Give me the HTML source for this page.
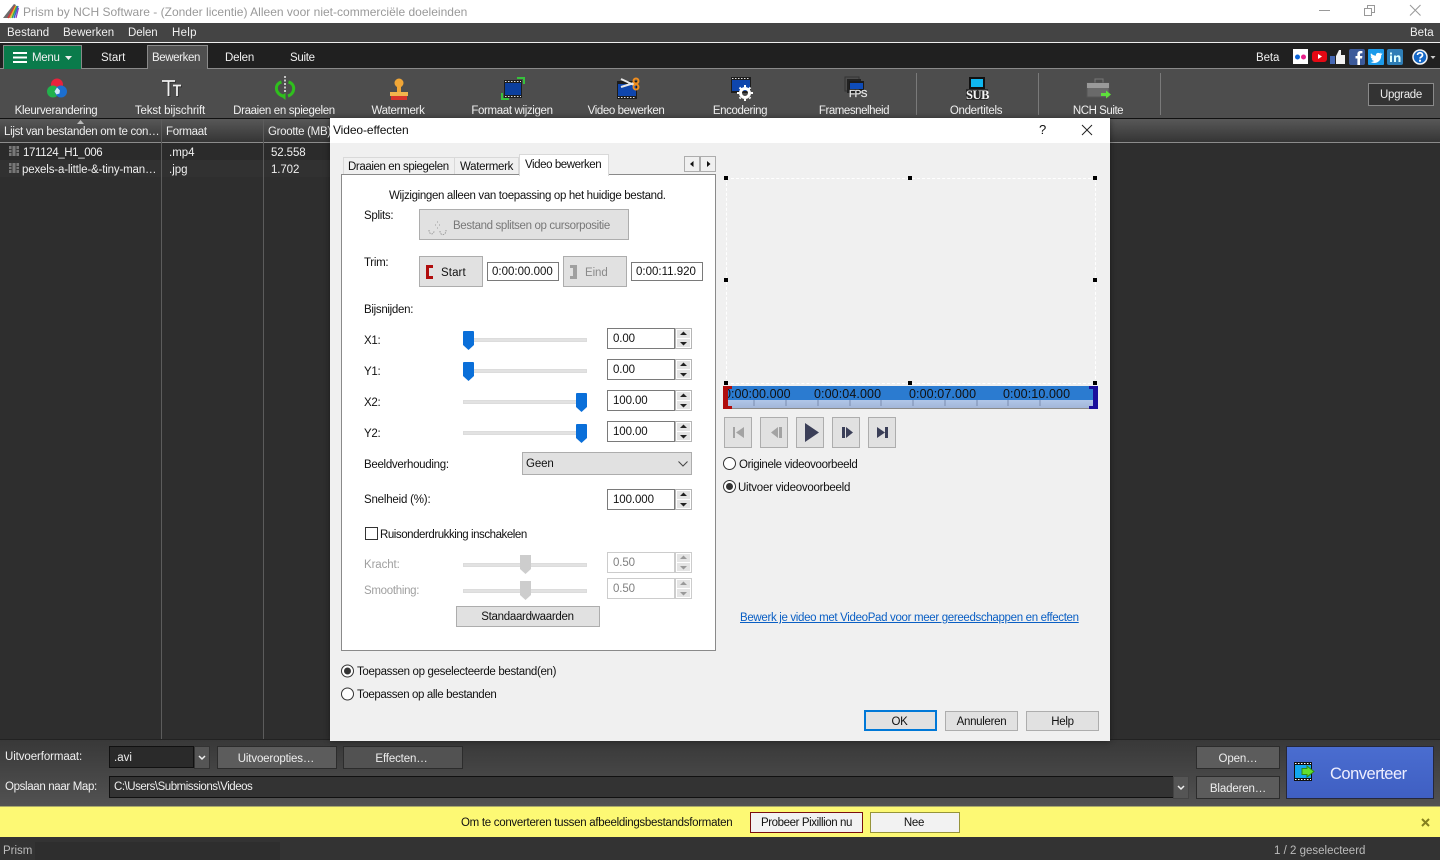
<!DOCTYPE html>
<html lang="nl"><head><meta charset="utf-8"><title>Prism by NCH Software</title>
<style>
*{box-sizing:border-box}
html,body{margin:0;padding:0;width:1440px;height:860px;overflow:hidden;background:#2e2e2e}
body{position:relative;font-family:"Liberation Sans",sans-serif;font-size:11.5px;letter-spacing:-.3px}
.a{position:absolute}
.t{position:absolute;white-space:nowrap;line-height:14px;height:14px;transform:translateY(1px)}
.c{text-align:center}
.w{color:#f0f0f0}.k{color:#111}.g{color:#a0a0a0}
.btn{position:absolute;background:#e1e1e1;border:1px solid #adadad;color:#111;text-align:center;white-space:nowrap}
.dbtn{position:absolute;background:#5c5c5c;border:1px solid #2c2c2c;color:#eee;text-align:center;white-space:nowrap;line-height:24px;letter-spacing:-.15px}
.field{position:absolute;background:#fff;border:1px solid #7a7a7a;color:#111;line-height:19px;padding-left:4px;white-space:nowrap;letter-spacing:0}
.f21{line-height:21px;padding-left:5px;letter-spacing:-.1px}
.spin{position:absolute;width:17px;background:#fff;border:1px solid #b5b5b5}
.spin i{position:absolute;left:1px;width:13px;height:8px;background:#e4e4e4}
.spin i:first-child{top:1px}.spin i:last-child{bottom:1px}
.track{position:absolute;height:4px;width:124px;left:463px;background:#e2e2e2;border:1px solid #dcdcdc}
.h{position:absolute;width:4px;height:4px;background:#000}
.hdr{position:absolute;top:119px;height:23px;line-height:26px;color:#eee;white-space:nowrap}
.sep{position:absolute;top:73px;width:1px;height:42px;background:#7a7a7a}
.lbl{position:absolute;top:104px;height:14px;line-height:14px;color:#f0f0f0;white-space:nowrap;text-align:center}
svg{position:absolute;display:block;overflow:visible}
</style></head><body>

<!-- Title bar -->
<div class="a" style="left:0;top:0;width:1440px;height:23px;background:#fff"></div>
<svg style="left:3px;top:3px" width="16" height="16" viewBox="0 0 16 16"><path d="M0 15L11 1l2 1-6 13z" fill="#6d6d6d"/><path d="M5 15L12 3" stroke="#d8343c" stroke-width="1.500"/><path d="M7 15L13 3" stroke="#e8b92c" stroke-width="1.500"/><path d="M9 15L14 3" stroke="#3aa84a" stroke-width="1.500"/><path d="M11 15L15 3" stroke="#3468cc" stroke-width="1.500"/><path d="M13 15L15.500 5" stroke="#8a3cc0" stroke-width="1.200"/></svg>
<div class="t" style="left:23px;top:4px;color:#999;font-size:12px;letter-spacing:.01px">Prism by NCH Software - (Zonder licentie) Alleen voor niet-commerciële doeleinden</div>
<svg style="left:1318px;top:4px" width="112" height="14"><path d="M1 6.500H12" stroke="#999" fill="none"/><path d="M46.500 4.500h7v7h-7zM49.500 4.500v-3h7v7h-3" stroke="#999" fill="none"/><path d="M92 1L102.500 11.500M102.500 1L92 11.500" stroke="#999" fill="none"/></svg>

<!-- Menu bar -->
<div class="a" style="left:0;top:23px;width:1440px;height:19px;background:#444"></div>
<div class="a" style="left:0;top:42px;width:1440px;height:1px;background:#eee"></div>
<div class="t w" style="left:7px;top:25px;letter-spacing:0">Bestand</div>
<div class="t w" style="left:63px;top:25px;letter-spacing:0">Bewerken</div>
<div class="t w" style="left:128px;top:25px;letter-spacing:-.1px">Delen</div>
<div class="t w" style="left:172px;top:25px;letter-spacing:.3px">Help</div>
<div class="t w" style="left:1410px;top:25px;letter-spacing:0">Beta</div>

<!-- Tabs bar -->
<div class="a" style="left:0;top:43px;width:1440px;height:25px;background:#202020"></div>
<div class="a" style="left:0;top:68px;width:1440px;height:1px;background:#8a8a8a"></div>
<div class="a" style="left:3px;top:45px;width:79px;height:24px;background:#0a7b4b;border:1px solid #888;border-bottom:0"></div>
<svg style="left:13px;top:52px" width="14" height="11"><path d="M0 1h14M0 5.500h14M0 10h14" stroke="#fff" stroke-width="2"/></svg>
<div class="t w" style="left:32px;top:50px">Menu</div>
<svg style="left:65px;top:56px" width="7" height="4"><path d="M0 0h7L3.500 4z" fill="#eee"/></svg>
<div class="t w" style="left:101px;top:50px;letter-spacing:0">Start</div>
<div class="a" style="left:147px;top:45px;width:61px;height:24px;background:#4f4f4f;border:1px solid #8a8a8a;border-bottom:0"></div>
<div class="t w" style="left:152px;top:50px;letter-spacing:-.4px">Bewerken</div>
<div class="t w" style="left:225px;top:50px;letter-spacing:-.2px">Delen</div>
<div class="t w" style="left:290px;top:50px;letter-spacing:-.3px">Suite</div>
<div class="t w" style="left:1256px;top:50px;letter-spacing:-.1px">Beta</div>
<!-- Social -->
<svg style="left:1293px;top:49px" width="16" height="16"><rect width="15" height="15" fill="#fff"/><circle cx="4.500" cy="8" r="2.500" fill="#0a63d8"/><circle cx="10.500" cy="8" r="2.500" fill="#e8208a"/></svg>
<svg style="left:1312px;top:51px" width="16" height="13"><rect width="15" height="11" rx="3" fill="#e50914"/><path d="M6 3l4 2.500L6 8z" fill="#fff"/></svg>
<svg style="left:1330px;top:49px" width="16" height="16"><rect x="0" y="7" width="5" height="8" fill="#4668b4"/><path d="M6 7l3-6h2v5h4v9H6z" fill="#f2f2f2"/></svg>
<svg style="left:1349px;top:49px" width="16" height="16"><rect width="16" height="16" rx="2" fill="#3c5a9a"/><path d="M11 16V9.500h2l.4-2.500H11V5.500c0-.8.300-1.200 1.200-1.200h1.200V2h-2C9.500 2 8.400 3.200 8.400 5V7H6.500v2.500h1.900V16z" fill="#fff"/></svg>
<svg style="left:1368px;top:49px" width="16" height="16"><rect width="16" height="16" rx="1" fill="#1d9bea"/><path d="M13.500 4.500c-.5.200-1 .4-1.500.4.500-.3 1-.800 1.200-1.400-.5.300-1 .5-1.700.7C10.100 3.300 7.500 4.200 8 6.700 6 6.600 4.200 5.700 3 4.200c-.7 1.200-.3 2.700.8 3.400-.4 0-.8-.1-1.200-.3 0 1.300.9 2.400 2.200 2.700-.4.100-.8.100-1.200 0 .3 1.100 1.300 1.800 2.500 1.900-1 .8-2.300 1.200-3.600 1 5 3 11-.5 10.700-6.700.5-.4.900-.9 1.300-1.700z" fill="#fff"/></svg>
<svg style="left:1387px;top:49px" width="16" height="16"><rect width="16" height="16" rx="2" fill="#2e7eb6"/><path d="M3 6.500h2V13H3zM3 3.500h2v2H3zM7 6.500h2v1c.5-.8 1.300-1.200 2.200-1.200 1.600 0 2.300 1 2.300 2.800V13h-2V9.500c0-1-.3-1.500-1.100-1.500S9 8.600 9 9.500V13H7z" fill="#dff"/></svg>
<svg style="left:1412px;top:49px" width="22" height="16"><circle cx="8" cy="8" r="7" fill="#1467c6" stroke="#f4f4f4" stroke-width="1.500"/><path d="M5.500 6c0-3 5-3 5 0 0 2-2.500 2-2.500 3.500" fill="none" stroke="#fff" stroke-width="1.700"/><rect x="7" y="10.700" width="2" height="2" fill="#fff"/><path d="M18.500 7h5l-2.500 3z" fill="#ccc"/></svg>

<!-- Toolbar -->
<div class="a" style="left:0;top:69px;width:1440px;height:49px;background:#4d4d4d"></div>
<div class="a" style="left:0;top:118px;width:1440px;height:1px;background:#111"></div>
<div class="sep" style="left:916px"></div><div class="sep" style="left:1038px"></div><div class="sep" style="left:1160px"></div>
<svg style="left:47px;top:78px" width="20" height="20"><circle cx="10" cy="6.500" r="6" fill="#e8223c"/><circle cx="6" cy="13.500" r="6" fill="#22b14c"/><circle cx="14" cy="13.500" r="6" fill="#1c6fd0"/><path d="M10 9.500l3 3-.5 3-3 1-2-3z" fill="#cfe8f4"/></svg>
<svg style="left:161px;top:79px" width="20" height="19"><path d="M1 2h13M7.500 2V17M12 6.500h8M16 6.500V17" stroke="#222" stroke-width="1.800" fill="none" transform="translate(1,1)" opacity=".6"/><path d="M1 2h13M7.500 2V17M12 6.500h8M16 6.500V17" stroke="#f0f0f0" stroke-width="1.800" fill="none"/></svg>
<svg style="left:274px;top:76px" width="22" height="24"><path d="M11 0v17" stroke="#eee" stroke-dasharray="2 1.500" stroke-width="1.500"/><path d="M7.500 6C0 8 1 18 9 20M14.500 6C22 8 21 18 14 20" fill="none" stroke="#2fbf1d" stroke-width="3"/><path d="M11.500 24l-5-4 5-3z" fill="#2fbf1d"/></svg>
<svg style="left:389px;top:76px" width="20" height="24"><circle cx="10" cy="7" r="4.500" fill="#f0a637"/><path d="M8 10h4v6H8z" fill="#f0a637"/><path d="M1 16h18v4H1z" fill="#f3b54d"/><path d="M2 20h16v4H2z" fill="#d8352c"/></svg>
<svg style="left:501px;top:76px" width="24" height="24"><path d="M3 4h18v18H3z" fill="#1d1d1d"/><path d="M4 7h16v12H4z" fill="#0c3f9e"/><path d="M16 2h7v6M8 23H1v-6" fill="none" stroke="#37c13c" stroke-width="2"/><path d="M4 5.500h16M4 20.500h16" stroke="#ddd" stroke-dasharray="1.500 1.500"/></svg>
<svg style="left:617px;top:76px" width="24" height="24"><path d="M0 5h20v18H0z" fill="#1c1c1c"/><path d="M1 8h18v12H1z" fill="#0f46ad"/><path d="M1 21.500h18" stroke="#ddd" stroke-dasharray="1.500 1.500"/><path d="M4 3l13 6M4 11l13-4" stroke="#e6e6e6" stroke-width="2"/><circle cx="19" cy="5" r="2.500" fill="none" stroke="#ef8d1f" stroke-width="2"/><circle cx="19" cy="11" r="2.500" fill="none" stroke="#ef8d1f" stroke-width="2"/></svg>
<svg style="left:731px;top:76px" width="24" height="24"><path d="M0 1h20v16H0z" fill="#1c1c1c"/><path d="M1 4h18v11H1z" fill="#0f46ad"/><path d="M1 2.500h18" stroke="#ddd" stroke-dasharray="1.500 1.500"/><circle cx="14" cy="17" r="4.500" fill="none" stroke="#fff" stroke-width="3"/><path d="M14 9v16M6 17h16M8.500 11.500l11 11M19.500 11.500l-11 11" stroke="#fff" stroke-width="2" stroke-dasharray="2 12"/></svg>
<svg style="left:845px;top:77px" width="24" height="24"><path d="M0 0h14v14H0z" fill="none" stroke="#333"/><path d="M2 2h14v14H2z" fill="#222"/><path d="M4 4h15v10H4z" fill="#1b1b1b"/><path d="M5 6h13v6H5z" fill="#0f4cb8"/></svg>
<div class="t" style="left:849px;top:87px;color:#e8e8e8;font-size:10px;letter-spacing:-.5px;-webkit-text-stroke:.3px #e8e8e8">FPS</div>
<svg style="left:966px;top:77px" width="22" height="24"><path d="M3 0h16v12H3z" fill="#111"/><path d="M5 2h12v8H5z" fill="#10b6ee"/><path d="M0 12h22v11H0z" fill="#2a2a2a"/></svg>
<div class="t" style="left:966px;top:88px;color:#f4f4f4;font-size:12.500px;font-family:'Liberation Serif',serif;font-weight:bold;letter-spacing:-.4px;height:12px;line-height:12px">SUB</div>
<svg style="left:1086px;top:78px" width="26" height="22"><path d="M9 1h8v4H9z" fill="none" stroke="#777"/><path d="M1 5h22v14H1z" fill="#6a6a6a" stroke="#555"/><path d="M1 5h22v5H1z" fill="#9a9a9a"/><path d="M15 15h5v-2.500l5 4-5 4V18h-5z" fill="#5ee03c"/></svg>
<div class="lbl" style="left:-1px;width:114px">Kleurverandering</div>
<div class="lbl" style="left:113px;width:114px;letter-spacing:-.12px">Tekst bijschrift</div>
<div class="lbl" style="left:227px;width:114px;letter-spacing:-.35px">Draaien en spiegelen</div>
<div class="lbl" style="left:341px;width:114px">Watermerk</div>
<div class="lbl" style="left:455px;width:114px;letter-spacing:-.35px">Formaat wijzigen</div>
<div class="lbl" style="left:569px;width:114px;letter-spacing:-.4px">Video bewerken</div>
<div class="lbl" style="left:683px;width:114px;letter-spacing:-.4px">Encodering</div>
<div class="lbl" style="left:797px;width:114px;letter-spacing:-.45px">Framesnelheid</div>
<div class="lbl" style="left:919px;width:114px">Ondertitels</div>
<div class="lbl" style="left:1041px;width:114px;letter-spacing:-.45px">NCH Suite</div>
<div class="a" style="left:1368px;top:83px;width:66px;height:23px;background:#333;border:1px solid #8a8a8a;color:#eee;text-align:center;line-height:22px">Upgrade</div>

<!-- List -->
<div class="a" style="left:0;top:119px;width:1440px;height:23px;background:linear-gradient(#585858,#353535)"></div>
<div class="a" style="left:0;top:142px;width:1440px;height:1px;background:#8c8c8c"></div>
<div class="a" style="left:0;top:143px;width:330px;height:17px;background:#2b2b2b"></div>
<div class="a" style="left:0;top:160px;width:330px;height:17px;background:#313131"></div>
<div class="a" style="left:161px;top:119px;width:1px;height:620px;background:#5c5c5c"></div>
<div class="a" style="left:263px;top:119px;width:1px;height:620px;background:#5c5c5c"></div>
<div class="hdr" style="left:4px">Lijst van bestanden om te con…</div>
<div class="hdr" style="left:166px">Formaat</div>
<div class="hdr" style="left:268px">Grootte (MB)</div>
<svg style="left:77px;top:120px" width="7" height="4"><path d="M0 4L3.500 0 7 4z" fill="#bbb"/></svg>
<svg style="left:9px;top:146px" width="10" height="28"><g fill="#777"><path d="M0 0h10v10H0zM0 17h10v10H0z"/></g><path d="M3 0v10M7 0v10M0 3.500h3M0 6.500h3M7 3.500h3M7 6.500h3M3 17v10M7 17v10M0 20.500h3M0 23.500h3M7 20.500h3M7 23.500h3" stroke="#3a3a3a"/></svg>
<div class="t w" style="left:23px;top:145px;letter-spacing:-.38px">171124_H1_006</div>
<div class="t w" style="left:22px;top:162px;letter-spacing:-.16px">pexels-a-little-&amp;-tiny-man…</div>
<div class="t w" style="left:169px;top:145px;letter-spacing:0">.mp4</div>
<div class="t w" style="left:169px;top:162px;letter-spacing:0">.jpg</div>
<div class="t w" style="left:271px;top:145px;letter-spacing:-.1px">52.558</div>
<div class="t w" style="left:271px;top:162px;letter-spacing:-.1px">1.702</div>

<!-- Bottom panel -->
<div class="a" style="left:0;top:739px;width:1440px;height:67px;background:linear-gradient(#383838,#525252)"></div>
<div class="a" style="left:0;top:739px;width:1440px;height:1px;background:#222"></div>
<div class="t w" style="left:5px;top:749px;letter-spacing:-.1px">Uitvoerformaat:</div>
<div class="t w" style="left:5px;top:779px;letter-spacing:-.35px">Opslaan naar Map:</div>
<div class="a" style="left:109px;top:746px;width:85px;height:22px;background:#2a2a2a;border:1px solid #111;color:#eee;line-height:23px;padding-left:4px;letter-spacing:0">.avi</div>
<div class="a" style="left:194px;top:746px;width:16px;height:23px;background:#555;border:1px solid #333"></div>
<svg style="left:198px;top:755px" width="8" height="5"><path d="M1 1l3 3 3-3" fill="none" stroke="#eee" stroke-width="1.500"/></svg>
<div class="dbtn" style="left:217px;top:746px;width:120px;height:23px;padding-right:2px">Uitvoeropties…</div>
<div class="dbtn" style="left:343px;top:746px;width:120px;height:23px;background:#525252;padding-right:3px">Effecten…</div>
<div class="a" style="left:109px;top:776px;width:1064px;height:22px;background:#333;border-top:1px solid #111;border-left:1px solid #111;border-bottom:1px solid #111;color:#eee;line-height:20px;padding-left:4px;letter-spacing:-.48px">C:\Users\Submissions\Videos</div>
<div class="a" style="left:1173px;top:776px;width:16px;height:23px;background:#555;border:1px solid #444"></div>
<svg style="left:1177px;top:785px" width="8" height="5"><path d="M1 1l3 3 3-3" fill="none" stroke="#eee" stroke-width="1.500"/></svg>
<div class="dbtn" style="left:1196px;top:746px;width:84px;height:23px">Open…</div>
<div class="dbtn" style="left:1196px;top:776px;width:84px;height:23px">Bladeren…</div>
<div class="a" style="left:1286px;top:746px;width:148px;height:53px;background:linear-gradient(#4a6dd0,#3f5fc2);border:1px solid #26283a"></div>
<svg style="left:1294px;top:762px" width="22" height="20"><path d="M0 0h18v19H0z" fill="#111"/><path d="M1 3h16v13H1z" fill="#12a7ef"/><path d="M1 1.500h16M1 17.500h16" stroke="#fff" stroke-dasharray="1.500 1.500"/><path d="M8 6.500h5V4l7 5.500-7 5.500v-2.500H8z" fill="#62e02f" stroke="#2d8a16"/></svg>
<div class="t" style="left:1330px;top:764px;height:18px;line-height:18px;font-size:16.500px;color:#eef;letter-spacing:-.5px">Converteer</div>

<!-- Yellow bar -->
<div class="a" style="left:0;top:806px;width:1440px;height:31px;background:#fdf974;border-top:1px solid #a9a96a"></div>
<div class="t k" style="left:461px;top:815px;letter-spacing:-.29px">Om te converteren tussen afbeeldingsbestandsformaten</div>
<div class="a" style="left:750px;top:812px;width:113px;height:21px;background:#f2f2f2;border:1px solid #7a0f0f;color:#111;text-align:center;line-height:20px;letter-spacing:-.4px">Probeer Pixillion nu</div>
<div class="a" style="left:870px;top:812px;width:90px;height:21px;background:#f2f2f2;border:1px solid #96943a;color:#111;text-align:center;line-height:20px;padding-right:2px">Nee</div>
<svg style="left:1421px;top:818px" width="9" height="9"><path d="M1 1l7 7M8 1L1 8" stroke="#85801e" stroke-width="2"/></svg>

<!-- Status -->
<div class="a" style="left:0;top:837px;width:1440px;height:23px;background:#333"></div>
<div class="a" style="left:35px;top:842px;width:245px;height:18px;background:#2e2e2e"></div>
<div class="t" style="left:3px;top:843px;color:#bbb;letter-spacing:0">Prism</div>
<div class="t" style="left:1274px;top:843px;color:#bbb;letter-spacing:0">1 / 2 geselecteerd</div>

<!-- Dialog -->
<div class="a" style="left:330px;top:118px;width:780px;height:623px;background:#f0f0f0;box-shadow:0 0 6px rgba(0,0,0,.45)"></div>
<div class="a" style="left:330px;top:118px;width:780px;height:25px;background:#fff"></div>
<div class="t k" style="left:333px;top:122px;font-size:12px;letter-spacing:-.1px">Video-effecten</div>
<div class="t k" style="left:1039px;top:122px;font-size:13px;letter-spacing:0">?</div>
<svg style="left:1082px;top:125px" width="10" height="10"><path d="M0 0l10 10M10 0L0 10" stroke="#222" fill="none"/></svg>

<!-- Tabs -->
<div class="a" style="left:343px;top:157px;width:112px;height:18px;background:#f0f0f0;border:1px solid #d9d9d9;border-bottom:0"></div>
<div class="a" style="left:455px;top:157px;width:64px;height:18px;background:#f0f0f0;border:1px solid #d9d9d9;border-left:0;border-bottom:0"></div>
<div class="t k" style="left:348px;top:159px;letter-spacing:-.4px">Draaien en spiegelen</div>
<div class="t k" style="left:460px;top:159px">Watermerk</div>
<div class="a" style="left:341px;top:174px;width:375px;height:477px;background:#fff;border:1px solid #8a8a8a"></div>
<div class="a" style="left:519px;top:154px;width:90px;height:22px;background:#fff;border:1px solid #d9d9d9;border-bottom:0"></div>
<div class="t k" style="left:525px;top:157px;letter-spacing:-.43px">Video bewerken</div>
<div class="a" style="left:684px;top:156px;width:16px;height:16px;background:#f0f0f0;border:1px solid #adadad"></div>
<div class="a" style="left:700px;top:156px;width:16px;height:16px;background:#f0f0f0;border:1px solid #adadad"></div>
<svg style="left:690px;top:161px" width="24" height="6"><path d="M3.500 0v6L0 3zM17 0v6l3.500-3z" fill="#111"/></svg>

<div class="t k" style="left:389px;top:188px;letter-spacing:-.34px">Wijzigingen alleen van toepassing op het huidige bestand.</div>
<div class="t k" style="left:364px;top:208px">Splits:</div>
<div class="btn" style="left:419px;top:209px;width:210px;height:31px"></div>
<svg style="left:428px;top:220px" width="20" height="17"><path d="M1 10c0 5 5 5 5 1M9 2h1M7 5h1M11 5h1M9 8h1M12 11c0 5 6 5 6-1" stroke="#9a9a9a" fill="none" stroke-dasharray="1.500 1"/></svg>
<div class="t" style="left:453px;top:218px;color:#787878;letter-spacing:-.36px">Bestand splitsen op cursorpositie</div>
<div class="t k" style="left:364px;top:255px">Trim:</div>
<div class="btn" style="left:419px;top:256px;width:64px;height:31px"></div>
<svg style="left:426px;top:265px" width="8" height="14"><path d="M0 0h7v3H3v8h4v3H0z" fill="#b00d0d"/></svg>
<div class="t k" style="left:441px;top:265px;letter-spacing:.1px">Start</div>
<div class="field" style="left:487px;top:262px;width:72px;height:19px">0:00:00.000</div>
<div class="btn" style="left:563px;top:256px;width:64px;height:31px"></div>
<svg style="left:570px;top:265px" width="7" height="14"><path d="M0 0h7v14H0v-3h3V3H0z" fill="#a0a0a0"/></svg>
<div class="t" style="left:585px;top:265px;color:#8a8a8a;letter-spacing:-.1px">Eind</div>
<div class="field" style="left:631px;top:262px;width:72px;height:19px">0:00:11.920</div>
<div class="t k" style="left:364px;top:302px">Bijsnijden:</div>

<div class="t k" style="left:364px;top:333px">X1:</div>
<div class="t k" style="left:364px;top:364px">Y1:</div>
<div class="t k" style="left:364px;top:395px">X2:</div>
<div class="t k" style="left:364px;top:426px">Y2:</div>
<div class="track" style="top:338px"></div><div class="track" style="top:369px"></div><div class="track" style="top:400px"></div><div class="track" style="top:431px"></div>
<svg style="left:463px;top:331px" width="11" height="19"><path d="M0 1a1 1 0 011-1h9a1 1 0 011 1v13l-5.500 5L0 14z" fill="#0a6fd9"/></svg>
<svg style="left:463px;top:362px" width="11" height="19"><path d="M0 1a1 1 0 011-1h9a1 1 0 011 1v13l-5.500 5L0 14z" fill="#0a6fd9"/></svg>
<svg style="left:576px;top:393px" width="11" height="19"><path d="M0 1a1 1 0 011-1h9a1 1 0 011 1v13l-5.500 5L0 14z" fill="#0a6fd9"/></svg>
<svg style="left:576px;top:424px" width="11" height="19"><path d="M0 1a1 1 0 011-1h9a1 1 0 011 1v13l-5.500 5L0 14z" fill="#0a6fd9"/></svg>

<div class="field f21" style="left:607px;top:328px;width:68px;height:21px">0.00</div>
<div class="field f21" style="left:607px;top:359px;width:68px;height:21px">0.00</div>
<div class="field f21" style="left:607px;top:390px;width:68px;height:21px">100.00</div>
<div class="field f21" style="left:607px;top:421px;width:68px;height:21px">100.00</div>
<div class="field f21" style="left:607px;top:489px;width:68px;height:21px">100.000</div>
<div class="spin" style="left:675px;top:328px;height:21px"><i></i><i></i></div>
<div class="spin" style="left:675px;top:359px;height:21px"><i></i><i></i></div>
<div class="spin" style="left:675px;top:390px;height:21px"><i></i><i></i></div>
<div class="spin" style="left:675px;top:421px;height:21px"><i></i><i></i></div>
<div class="spin" style="left:675px;top:489px;height:21px"><i></i><i></i></div>
<svg style="left:680px;top:331px" width="7" height="180"><path d="M0 4l3.500-3.500L7 4zM0 11h7l-3.500 3.500z" fill="#222"/><path d="M0 35l3.500-3.500L7 35zM0 42h7l-3.500 3.500zM0 66l3.500-3.500L7 66zM0 73h7l-3.500 3.500zM0 97l3.500-3.500L7 97zM0 104h7l-3.500 3.500zM0 165l3.500-3.500L7 165zM0 172h7l-3.500 3.500z" fill="#222"/></svg>

<div class="t k" style="left:364px;top:457px;letter-spacing:-.3px">Beeldverhouding:</div>
<div class="a" style="left:522px;top:452px;width:170px;height:23px;background:#e1e1e1;border:1px solid #adadad;color:#111;line-height:22px;padding-left:3px;letter-spacing:-.1px">Geen</div>
<svg style="left:678px;top:461px" width="10" height="6"><path d="M.5.5L5 5 9.500.5" fill="none" stroke="#444"/></svg>
<div class="t k" style="left:364px;top:492px;letter-spacing:-.2px">Snelheid (%):</div>

<div class="a" style="left:365px;top:527px;width:13px;height:13px;background:#fff;border:1px solid #333"></div>
<div class="t k" style="left:380px;top:527px;letter-spacing:-.45px">Ruisonderdrukking inschakelen</div>
<div class="t" style="left:364px;top:557px;color:#a0a0a0;letter-spacing:-.1px">Kracht:</div>
<div class="t" style="left:364px;top:583px;color:#a0a0a0;letter-spacing:-.3px">Smoothing:</div>
<div class="track" style="top:563px"></div><div class="track" style="top:589px"></div>
<svg style="left:520px;top:555px" width="11" height="19"><path d="M0 0h11v14l-5.500 5L0 14z" fill="#cdcdcd"/></svg>
<svg style="left:520px;top:581px" width="11" height="19"><path d="M0 0h11v14l-5.500 5L0 14z" fill="#cdcdcd"/></svg>
<div class="field f21" style="left:607px;top:552px;width:68px;height:21px;border-color:#ccc;color:#808080">0.50</div>
<div class="field f21" style="left:607px;top:578px;width:68px;height:21px;border-color:#ccc;color:#808080">0.50</div>
<div class="spin" style="left:675px;top:552px;height:21px;border-color:#ccc"><i></i><i></i></div>
<div class="spin" style="left:675px;top:578px;height:21px;border-color:#ccc"><i></i><i></i></div>
<svg style="left:680px;top:555px" width="7" height="45"><path d="M0 4l3.500-3.500L7 4zM0 11h7l-3.500 3.500zM0 30l3.500-3.500L7 30zM0 37h7l-3.500 3.500z" fill="#999"/></svg>
<div class="btn" style="left:456px;top:606px;width:144px;height:21px;line-height:21px;padding-right:1px">Standaardwaarden</div>

<!-- radios -->
<svg style="left:341px;top:664px" width="14" height="37"><circle cx="6.500" cy="7" r="6" fill="#fff" stroke="#333"/><circle cx="6.500" cy="7" r="3.500" fill="#333"/><circle cx="6.500" cy="30" r="6" fill="#fff" stroke="#333"/></svg>
<div class="t k" style="left:357px;top:664px;letter-spacing:-.33px">Toepassen op geselecteerde bestand(en)</div>
<div class="t k" style="left:357px;top:687px;letter-spacing:-.38px">Toepassen op alle bestanden</div>

<!-- Preview -->
<div class="a" style="left:726px;top:178px;width:370px;height:206px;border:1px dashed #fff"></div>
<div class="h" style="left:724px;top:176px"></div><div class="h" style="left:908px;top:176px"></div><div class="h" style="left:1093px;top:176px"></div>
<div class="h" style="left:724px;top:278px"></div><div class="h" style="left:1093px;top:278px"></div>
<div class="h" style="left:724px;top:381px"></div><div class="h" style="left:908px;top:381px"></div><div class="h" style="left:1093px;top:381px"></div>

<!-- Timeline -->
<div class="a" style="left:724px;top:386px;width:374px;height:14px;background:#2b7bd0"></div>
<div class="a" style="left:724px;top:400px;width:374px;height:9px;background:linear-gradient(#b0c6e8,#a3b6d8);border-bottom:1px solid #8a8a8a"></div>
<div class="t k" style="left:724px;top:386px;font-size:12.500px;letter-spacing:.05px">0:00:00.000</div>
<div class="t k" style="left:814px;top:386px;font-size:12.500px;letter-spacing:.1px">0:00:04.000</div>
<div class="t k" style="left:909px;top:386px;font-size:12.500px;letter-spacing:.1px">0:00:07.000</div>
<div class="t k" style="left:1003px;top:386px;font-size:12.500px;letter-spacing:.1px">0:00:10.000</div>
<svg style="left:723px;top:386px" width="376" height="23"><path d="M0 0h9v3H5v17h4v3H0z" fill="#b00d0d"/><path d="M375 0h-9v3h4v17h-4v3h9z" fill="#1a0f9c"/><path d="M31 14v6M63 14v6M95 14v6M127 14v6M158 14v6M190 14v6M222 14v6M254 14v6M285 14v6M317 14v6" stroke="#7b8db0"/></svg>

<!-- Player buttons -->
<div class="btn" style="left:724px;top:417px;width:28px;height:31px"></div>
<div class="btn" style="left:760px;top:417px;width:28px;height:31px"></div>
<div class="btn" style="left:796px;top:417px;width:28px;height:31px"></div>
<div class="btn" style="left:832px;top:417px;width:28px;height:31px"></div>
<div class="btn" style="left:868px;top:417px;width:28px;height:31px"></div>
<svg style="left:724px;top:417px" width="172" height="31">
<path d="M9 10h2v11H9zM20 10v11l-8-5.500z" fill="#a3a3a3"/>
<path d="M47 15.500L54 10v11zM55 10h3v11h-3z" fill="#a3a3a3"/>
<path d="M81 6L95 15.500 81 25z" fill="#3b3f58"/>
<path d="M118 10h3v11h-3zM122 10l7 5.500-7 5.500z" fill="#3b3f58"/>
<path d="M153 10l8 5.500-8 5.500zM161 10h3v11h-3z" fill="#3b3f58"/>
</svg>

<svg style="left:723px;top:457px" width="14" height="37"><circle cx="6.500" cy="6.500" r="6" fill="#fff" stroke="#333"/><circle cx="6.500" cy="29.500" r="6" fill="#fff" stroke="#333"/><circle cx="6.500" cy="29.500" r="3.500" fill="#333"/></svg>
<div class="t k" style="left:739px;top:457px;letter-spacing:-.37px">Originele videovoorbeeld</div>
<div class="t k" style="left:738px;top:480px;letter-spacing:-.25px">Uitvoer videovoorbeeld</div>

<div class="t" style="left:740px;top:610px;color:#0a5fc4;text-decoration:underline;letter-spacing:-.33px">Bewerk je video met VideoPad voor meer gereedschappen en effecten</div>

<div class="btn" style="left:864px;top:710px;width:73px;height:21px;border:2px solid #0078d7;line-height:20px;padding-right:2px">OK</div>
<div class="btn" style="left:945px;top:711px;width:73px;height:20px;line-height:20px">Annuleren</div>
<div class="btn" style="left:1026px;top:711px;width:73px;height:20px;line-height:20px">Help</div>

</body></html>
